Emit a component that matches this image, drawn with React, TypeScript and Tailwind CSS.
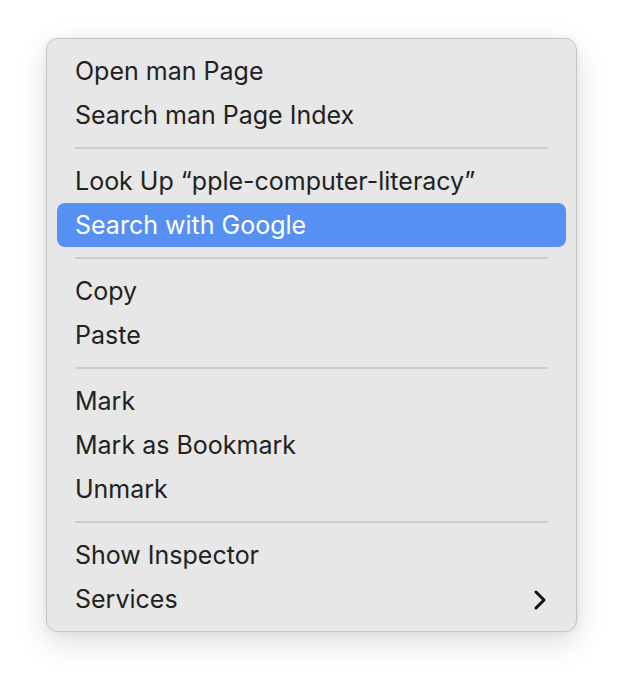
import React from 'react';

type MenuEntry =
  | { type: 'item'; label: string; active?: boolean; submenu?: boolean }
  | { type: 'separator' };

const entries: MenuEntry[] = [
  { type: 'item', label: 'Open man Page' },
  { type: 'item', label: 'Search man Page Index' },
  { type: 'separator' },
  { type: 'item', label: 'Look Up \u201Cpple-computer-literacy\u201D' },
  { type: 'item', label: 'Search with Google', active: true },
  { type: 'separator' },
  { type: 'item', label: 'Copy' },
  { type: 'item', label: 'Paste' },
  { type: 'separator' },
  { type: 'item', label: 'Mark' },
  { type: 'item', label: 'Mark as Bookmark' },
  { type: 'item', label: 'Unmark' },
  { type: 'separator' },
  { type: 'item', label: 'Show Inspector' },
  { type: 'item', label: 'Services', submenu: true },
];

const Chevron: React.FC = () => (
  <svg width="12" height="20" viewBox="0 0 12 20" fill="none">
    <path d="M2 2 L10 10 L2 18" stroke="#111" strokeWidth="3" strokeLinecap="round" strokeLinejoin="round" />
  </svg>
);

const App: React.FC = () => {
  return (
    <div className="min-h-[684px] w-[622px] bg-white pt-[38px] pl-[46px] font-['Inter','Noto_Sans',sans-serif]">
      <div className="w-[531px] rounded-[12px] border border-[#c4c4c4] bg-[#e6e7e6] px-[10px] py-[10px] shadow-[0_10px_30px_rgba(0,0,0,0.14),0_0_6px_rgba(0,0,0,0.06)]">
        {entries.map((entry, index) =>
          entry.type === 'separator' ? (
            <div key={index} className="flex h-[22px] items-center pl-[18px] pr-[18px]">
              <div className="h-[2px] w-full bg-[#cdcdcd]" />
            </div>
          ) : (
            <div
              key={index}
              className={`flex h-[44px] items-center justify-between rounded-[8px] pt-[2px] pl-[18px] pr-[20px] text-[25px] ${
                entry.active ? 'bg-[#5590f2] text-white' : 'text-[#222222]'
              }`}
            >
              <span>{entry.label}</span>
              {entry.submenu && <Chevron />}
            </div>
          )
        )}
      </div>
    </div>
  );
};

export default App;
